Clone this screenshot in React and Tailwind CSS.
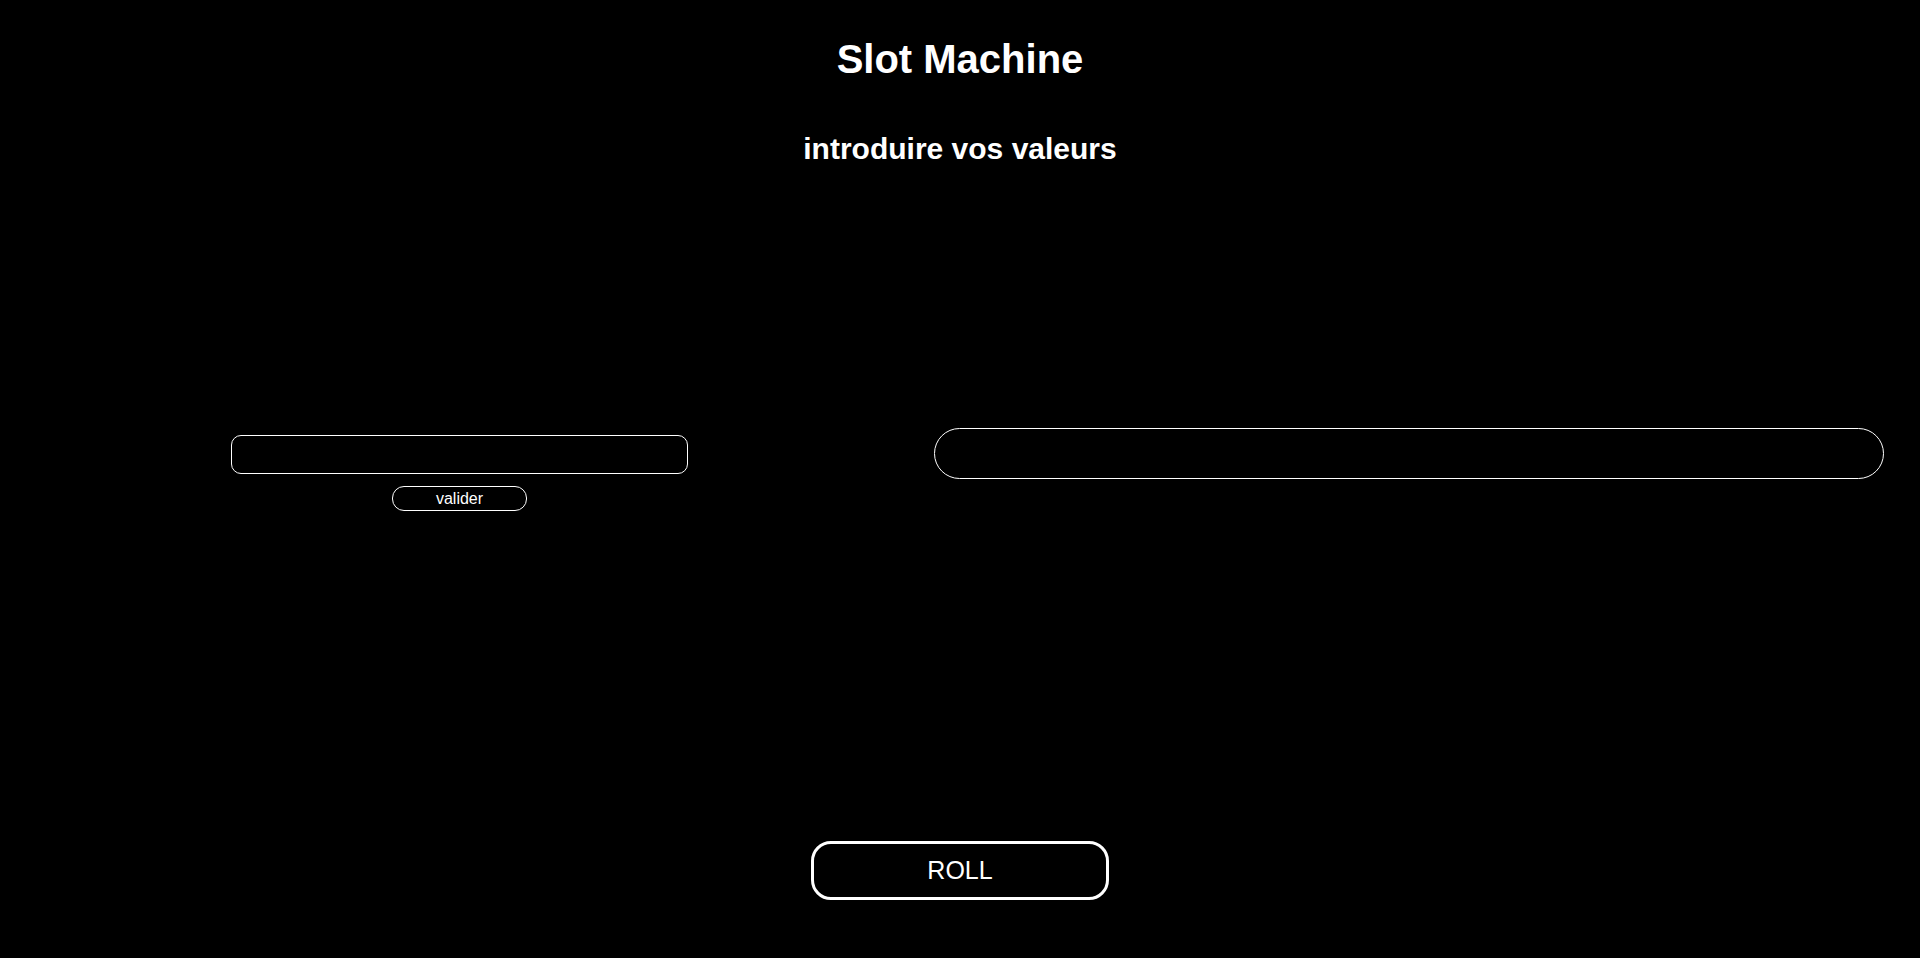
export default function App() {
  return (
    <div
      className="min-h-[958px] w-full bg-black text-white"
      style={{ fontFamily: '"Liberation Sans", Arial, sans-serif' }}
    >
      <h1 className="pt-[37px] text-center text-[40px] font-bold leading-[45px]">Slot Machine</h1>
      <h2 className="mt-[50px] text-center text-[30px] font-bold leading-[34px]">introduire vos valeurs</h2>

      <div className="mt-[262px] flex items-start">
        <div className="mt-[7px] flex w-[919px] flex-col items-center">
          <input
            type="text"
            className="h-[39px] w-[457px] rounded-[10px] border border-white bg-black px-3 text-white outline-none"
          />
          <button className="mt-[12px] h-[25px] w-[135px] rounded-[12px] border border-white bg-black text-[16px] leading-none text-white">
            valider
          </button>
        </div>
        <input
          type="text"
          className="ml-[15px] h-[51px] w-[950px] rounded-[26px] border border-white bg-black px-5 text-white outline-none"
        />
      </div>

      <div className="mt-[330px] flex justify-center">
        <button className="h-[59px] w-[298px] rounded-[20px] border-[3px] border-white bg-black text-[25px] text-white">
          ROLL
        </button>
      </div>
    </div>
  )
}
